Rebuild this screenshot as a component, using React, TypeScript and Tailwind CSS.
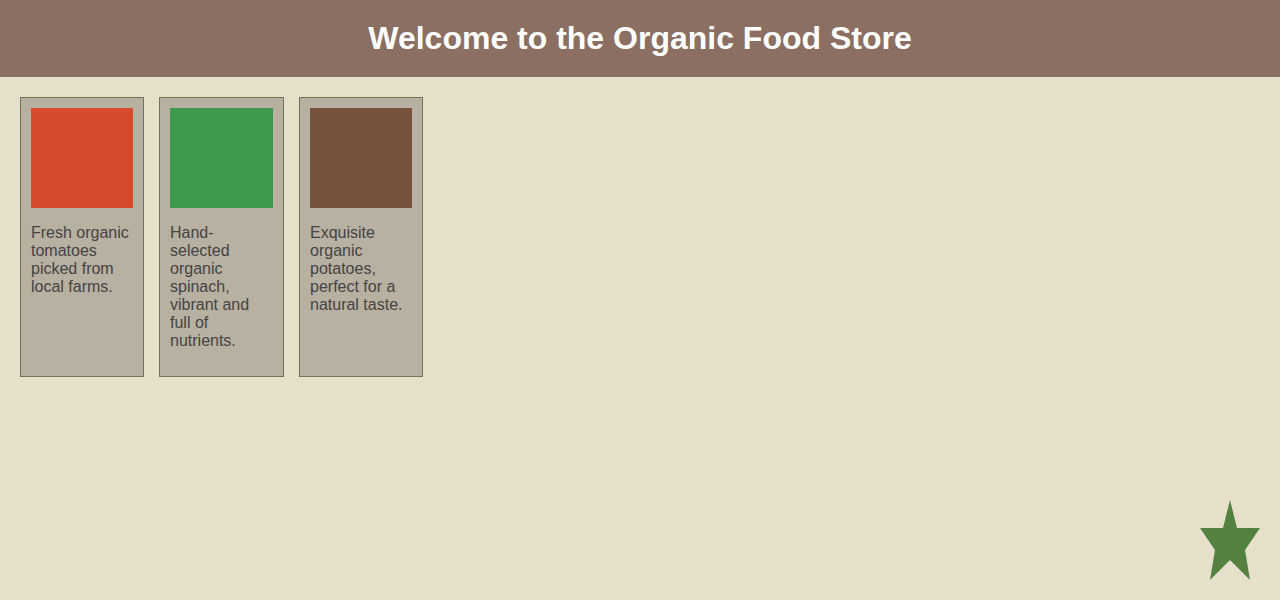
import React from "react";

type Product = {
  color: string;
  width: string;
  text: string;
};

const products: Product[] = [
  {
    color: "bg-[#d84a2d]",
    width: "w-[124px]",
    text: "Fresh organic tomatoes picked from local farms.",
  },
  {
    color: "bg-[#3e9a4c]",
    width: "w-[125px]",
    text: "Hand-selected organic spinach, vibrant and full of nutrients.",
  },
  {
    color: "bg-[#74523c]",
    width: "w-[124px]",
    text: "Exquisite organic potatoes, perfect for a natural taste.",
  },
];

const Star = () => (
  <svg
    className="fixed right-[20px] bottom-[20px]"
    width="60"
    height="80"
    viewBox="0 0 60 80"
  >
    <polygon
      points="30,0 37,28 60,28 45,50 50,80 30,60 10,80 15,50 0,28 23,28"
      fill="#528140"
    />
  </svg>
);

const App: React.FC = () => {
  return (
    <div className="min-h-[600px] bg-[#e6e0ca] font-['Liberation_Sans',Arial,sans-serif]">
      <header className="bg-[#8b6f63] py-[20px] text-center">
        <h1 className="text-[32px] leading-[37px] font-bold text-white">
          Welcome to the Organic Food Store
        </h1>
      </header>
      <main className="flex items-start gap-[15px] p-[20px]">
        {products.map((p, i) => (
          <div
            key={i}
            className={`${p.width} h-[280px] border border-[#7b6f53] bg-[#b8b0a0] p-[10px]`}
          >
            <div className={`${p.color} h-[100px] w-full`} />
            <p className="mt-[16px] text-[16px] leading-[18px] text-[#444444]">
              {p.text}
            </p>
          </div>
        ))}
      </main>
      <Star />
    </div>
  );
};

export default App;
